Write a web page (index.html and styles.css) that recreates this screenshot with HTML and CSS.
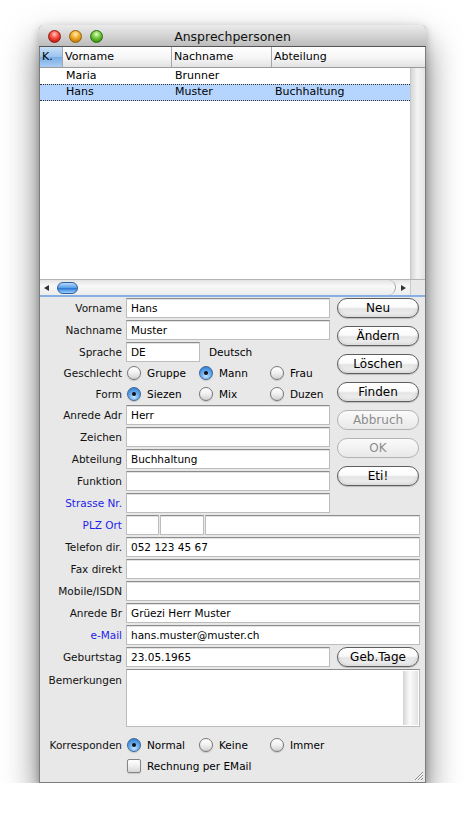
FILE: index.html
```html
<!DOCTYPE html>
<html lang="de">
<head>
    <meta charset="UTF-8">
    <meta name="viewport" content="width=device-width, initial-scale=1.0">
    <title>Ansprechpersonen</title>
    <link rel="stylesheet" href="styles.css">
</head>
<body>
    <div class="window">
        <div class="titlebar">
            <div class="lights">
                <span class="light red"></span>
                <span class="light yellow"></span>
                <span class="light green"></span>
            </div>
            <div class="title">Ansprechpersonen</div>
        </div>

        <div class="list">
            <div class="thead">
                <div class="th col-k selected">K.</div>
                <div class="th col-vor">Vorname</div>
                <div class="th col-nach">Nachname</div>
                <div class="th col-abt">Abteilung</div>
            </div>
            <div class="list-body">
                <div class="rows">
                    <div class="tr">
                        <div class="td col-k"></div>
                        <div class="td col-vor">Maria</div>
                        <div class="td col-nach">Brunner</div>
                        <div class="td col-abt"></div>
                    </div>
                    <div class="tr active">
                        <div class="td col-k"></div>
                        <div class="td col-vor">Hans</div>
                        <div class="td col-nach">Muster</div>
                        <div class="td col-abt">Buchhaltung</div>
                    </div>
                </div>
                <div class="vscroll"></div>
            </div>
            <div class="hscroll">
                <div class="htrack">
                    <span class="arrow-left"></span>
                    <span class="thumb"></span>
                    <span class="track-end"></span>
                    <span class="arrow-right"></span>
                </div>
                <div class="corner"></div>
            </div>
        </div>

        <div class="divider"></div>

        <div class="form">
            <div class="top">
                <div class="left">
                    <div class="row">
                        <label class="label">Vorname</label>
                        <div class="field">Hans</div>
                    </div>
                    <div class="row">
                        <label class="label">Nachname</label>
                        <div class="field">Muster</div>
                    </div>
                    <div class="row">
                        <label class="label">Sprache</label>
                        <div class="field short">DE</div>
                        <span class="note">Deutsch</span>
                    </div>
                    <div class="row radios">
                        <label class="label">Geschlecht</label>
                        <div class="opts">
                            <span class="opt"><span class="radio"></span>Gruppe</span>
                            <span class="opt"><span class="radio on"></span>Mann</span>
                            <span class="opt"><span class="radio"></span>Frau</span>
                        </div>
                    </div>
                    <div class="row radios last">
                        <label class="label">Form</label>
                        <div class="opts">
                            <span class="opt"><span class="radio on"></span>Siezen</span>
                            <span class="opt"><span class="radio"></span>Mix</span>
                            <span class="opt"><span class="radio"></span>Duzen</span>
                        </div>
                    </div>
                    <div class="row">
                        <label class="label">Anrede Adr</label>
                        <div class="field">Herr</div>
                    </div>
                    <div class="row">
                        <label class="label">Zeichen</label>
                        <div class="field"></div>
                    </div>
                    <div class="row">
                        <label class="label">Abteilung</label>
                        <div class="field">Buchhaltung</div>
                    </div>
                    <div class="row">
                        <label class="label">Funktion</label>
                        <div class="field"></div>
                    </div>
                    <div class="row">
                        <label class="label link">Strasse Nr.</label>
                        <div class="field"></div>
                    </div>
                </div>

                <div class="buttons">
                    <button class="btn">Neu</button>
                    <button class="btn">Ändern</button>
                    <button class="btn">Löschen</button>
                    <button class="btn">Finden</button>
                    <button class="btn" disabled>Abbruch</button>
                    <button class="btn" disabled>OK</button>
                    <button class="btn">Eti!</button>
                </div>
            </div>

            <div class="row">
                <label class="label link">PLZ Ort</label>
                <div class="field plz"></div>
                <div class="field plz2"></div>
                <div class="field ort"></div>
            </div>
            <div class="row">
                <label class="label">Telefon dir.</label>
                <div class="field wide">052 123 45 67</div>
            </div>
            <div class="row">
                <label class="label">Fax direkt</label>
                <div class="field wide"></div>
            </div>
            <div class="row">
                <label class="label">Mobile/ISDN</label>
                <div class="field wide"></div>
            </div>
            <div class="row">
                <label class="label">Anrede Br</label>
                <div class="field wide">Grüezi Herr Muster</div>
            </div>
            <div class="row">
                <label class="label link">e-Mail</label>
                <div class="field wide">hans.muster@muster.ch</div>
            </div>
            <div class="row">
                <label class="label">Geburtstag</label>
                <div class="field">23.05.1965</div>
                <button class="btn side">Geb.Tage</button>
            </div>
            <div class="row memo-row">
                <label class="label">Bemerkungen</label>
                <div class="memo"><div class="memo-scroll"></div></div>
            </div>

            <div class="row radios korr">
                <label class="label">Korresponden</label>
                <div class="opts">
                    <span class="opt"><span class="radio on"></span>Normal</span>
                    <span class="opt"><span class="radio"></span>Keine</span>
                    <span class="opt"><span class="radio"></span>Immer</span>
                </div>
            </div>
            <div class="row check-row">
                <span class="label"></span>
                <span class="opt"><span class="checkbox"></span>Rechnung per EMail</span>
            </div>
        </div>

        <svg class="grip" width="12" height="12" viewBox="0 0 12 12">
            <path d="M11 3 L3 11 M11 6 L6 11 M11 9 L9 11" stroke="#8a8a8a" stroke-width="1"/>
            <path d="M11 4 L4 11 M11 7 L7 11" stroke="#fff" stroke-width="1"/>
        </svg>
    </div>
</body>
</html>
```

FILE: styles.css
```css
* {
    box-sizing: border-box;
}

body {
    margin: 0;
    background-color: #ffffff;
    font-family: "DejaVu Sans", "Liberation Sans", sans-serif;
    color: #000;
}

.window {
    position: relative;
    margin: 25px 0 0 39px;
    width: 387px;
    height: 758px;
    border: 1px solid #7c7c7c;
    border-top: none;
    border-radius: 5px 5px 0 0;
    background-color: #e8e8e8;
    box-shadow: 0 18px 34px rgba(0, 0, 0, 0.55), 0 3px 8px rgba(0, 0, 0, 0.25);
}

/* title bar */
.titlebar {
    position: relative;
    height: 22px;
    margin: 0 -1px;
    border-radius: 5px 5px 0 0;
    border-bottom: 1px solid #555;
    background: linear-gradient(#ebebeb, #d4d4d4 50%, #bcbcbc);
    display: flex;
    align-items: center;
    justify-content: center;
}

.lights {
    position: absolute;
    left: 9px;
    top: 5px;
    display: flex;
    gap: 8px;
}

.light {
    width: 13px;
    height: 13px;
    border-radius: 50%;
}

.red {
    background: radial-gradient(circle at 50% 30%, #ffd0c8 0, #ff5a4c 35%, #c2170f 80%);
    border: 1px solid #8e1b12;
}

.yellow {
    background: radial-gradient(circle at 50% 30%, #fff0c0 0, #f9b63a 35%, #c47a07 80%);
    border: 1px solid #946209;
}

.green {
    background: radial-gradient(circle at 50% 30%, #e4ffd0 0, #80d24a 35%, #37920f 80%);
    border: 1px solid #2f6e12;
}

.title {
    font-size: 12.5px;
    color: #111;
    padding-top: 1px;
}

/* list */
.thead {
    display: flex;
    height: 21px;
    border-bottom: 1px solid #9a9a9a;
    background: linear-gradient(#ffffff, #f5f5f5 55%, #e2e2e2);
}

.th {
    font-size: 11px;
    line-height: 20px;
    padding-left: 2px;
    border-right: 1px solid #a6a6a6;
    white-space: nowrap;
}

.th.selected {
    background: linear-gradient(#c9e0f8, #9cc3ee 50%, #7aaee6 52%, #aacdf3);
}

.th.col-abt {
    border-right: none;
}

.col-k { width: 23px; flex: none; }
.col-vor { width: 109px; flex: none; }
.col-nach { width: 100px; flex: none; }
.col-abt { flex: 1; }

.list-body {
    display: flex;
    height: 211px;
    background-color: #ffffff;
}

.rows {
    width: 370px;
}

.tr {
    display: flex;
    height: 16px;
    font-size: 11px;
    line-height: 15px;
}

.td {
    padding-left: 3px;
    white-space: nowrap;
}

.tr.active {
    background-color: #b5d5ff;
    border-top: 1px dotted #333;
    border-bottom: 1px dotted #333;
    line-height: 14px;
    height: 17px;
}

.vscroll {
    flex: 1;
    border-left: 1px solid #c8c8c8;
    background: linear-gradient(to right, #d6d6d6, #f3f3f3 45%, #e4e4e4);
}

.hscroll {
    display: flex;
    height: 16px;
    border-top: 1px solid #b4b4b4;
}

.htrack {
    width: 370px;
    display: flex;
    align-items: center;
    background: linear-gradient(#e4e4e4, #f8f8f8 40%, #ececec);
}

.arrow-left {
    margin-left: 4px;
    width: 0;
    height: 0;
    border-top: 3px solid transparent;
    border-bottom: 3px solid transparent;
    border-right: 5px solid #333;
}

.thumb {
    margin-left: 8px;
    width: 21px;
    height: 12px;
    border-radius: 6px;
    border: 1px solid #2f5f9e;
    background: linear-gradient(#b9dafc, #5fa2ec 45%, #2f7bd8 55%, #9cd0ff);
}

.track-end {
    margin-left: auto;
    width: 8px;
    height: 15px;
    border-right: 1px solid #a6a6a6;
    border-radius: 0 8px 8px 0;
}

.arrow-right {
    margin: 0 4px 0 5px;
    width: 0;
    height: 0;
    border-top: 3px solid transparent;
    border-bottom: 3px solid transparent;
    border-left: 5px solid #333;
}

.corner {
    flex: 1;
    border-left: 1px solid #c8c8c8;
    background-color: #e8e8e8;
}

.divider {
    height: 2px;
    background-color: #86b0e2;
}

/* form */
.form {
    padding: 1px 4px 0 0;
}

.top {
    display: flex;
}

.left {
    width: 290px;
}

.buttons {
    margin-left: 7px;
    width: 82px;
    display: flex;
    flex-direction: column;
    gap: 8px;
}

.row {
    display: flex;
    align-items: center;
    height: 20px;
    margin-bottom: 2px;
}

.row.radios {
    height: 18px;
}

.row.radios.last {
    height: 19px;
}

.label {
    width: 86px;
    flex: none;
    padding-right: 4px;
    text-align: right;
    font-size: 10.5px;
    color: #111;
    white-space: nowrap;
}

.label.link {
    color: #1e1ee8;
}

.field {
    height: 20px;
    width: 204px;
    flex: none;
    padding-left: 4px;
    font-size: 10.5px;
    line-height: 18px;
    white-space: nowrap;
    overflow: hidden;
    background-color: #ffffff;
    border: 1px solid #bdbdbd;
    border-top-color: #8c8c8c;
    box-shadow: inset 0 1px 0 #e2e2e2;
}

.field.short {
    width: 74px;
}

.field.wide {
    width: 294px;
}

.field.plz {
    width: 33px;
}

.field.plz2 {
    width: 44px;
    margin-left: 1px;
}

.field.ort {
    width: 215px;
    margin-left: 1px;
}

.note {
    margin-left: 9px;
    font-size: 10.5px;
}

.opts {
    display: flex;
    margin-left: 1px;
}

.opt {
    display: flex;
    align-items: center;
    gap: 6px;
    width: 72px;
    font-size: 10.5px;
    white-space: nowrap;
}

.opt + .opt + .opt {
    width: 80px;
    margin-left: -1px;
}

.radio {
    position: relative;
    width: 14px;
    height: 14px;
    flex: none;
    border-radius: 50%;
    border: 1px solid #767676;
    background: linear-gradient(#ffffff, #f0f0f0 50%, #d0d0d0);
    box-shadow: 0 1px 1px rgba(0, 0, 0, 0.15);
}

.radio.on {
    border-color: #3e6796;
    background: radial-gradient(circle at 50% 75%, #c4e4ff 0, #6fb0f0 40%, #3a85d6 80%);
}

.radio.on::after {
    content: "";
    position: absolute;
    left: 4px;
    top: 4px;
    width: 4px;
    height: 4px;
    border-radius: 50%;
    background-color: #111;
}

.checkbox {
    width: 14px;
    height: 14px;
    flex: none;
    border-radius: 2px;
    border: 1px solid #858585;
    background: linear-gradient(#ffffff, #f0f0f0 50%, #d6d6d6);
    box-shadow: 0 1px 1px rgba(0, 0, 0, 0.12);
}

.btn {
    height: 20px;
    width: 82px;
    padding: 0;
    font-family: inherit;
    font-size: 12px;
    color: #000;
    border: 1px solid #5e5e5e;
    border-radius: 10px;
    background: linear-gradient(#ffffff, #fbfbfb 45%, #e4e4e4 55%, #f4f4f4);
    box-shadow: inset 0 -2px 3px rgba(0, 0, 0, 0.1), 0 1px 1px rgba(0, 0, 0, 0.18);
}

.btn:disabled {
    color: #8c8c8c;
    border-color: #b3b3b3;
    background: linear-gradient(#fafafa, #f2f2f2 50%, #e8e8e8);
    box-shadow: none;
}

.btn.side {
    margin-left: 7px;
}

.memo-row {
    height: 58px;
    align-items: flex-start;
    margin-bottom: 0;
}

.memo-row .label {
    padding-top: 5px;
}

.memo {
    width: 294px;
    height: 58px;
    display: flex;
    justify-content: flex-end;
    padding: 1px;
    background-color: #ffffff;
    border: 1px solid #bdbdbd;
    border-top-color: #8c8c8c;
}

.memo-scroll {
    width: 15px;
    background: linear-gradient(to right, #d4d4d4, #fbfbfb 45%, #e2e2e2);
}

.row.korr {
    margin-top: 9px;
    margin-bottom: 4px;
}

.check-row {
    height: 16px;
}

.check-row .opt {
    width: auto;
    margin-left: 1px;
}

.grip {
    position: absolute;
    right: 1px;
    bottom: 1px;
}
```
